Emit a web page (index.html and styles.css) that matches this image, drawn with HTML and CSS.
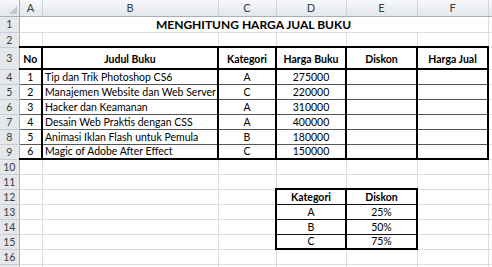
FILE: index.html
```html
<!DOCTYPE html>
<html>
<head>
<meta charset="utf-8">
<link rel="stylesheet" href="styles.css">
</head>
<body>
<table class="sheet">
  <colgroup>
    <col class="c-rh"><col class="c-a"><col class="c-b"><col class="c-c"><col class="c-d"><col class="c-e"><col class="c-f"><col class="c-g">
  </colgroup>
  <tr class="r-head">
    <td class="corner"><span class="tri"></span></td>
    <td class="ch">A</td><td class="ch">B</td><td class="ch">C</td><td class="ch">D</td><td class="ch">E</td><td class="ch">F</td><td class="ch"></td>
  </tr>
  <tr class="r-1">
    <td class="rh">1</td>
    <td colspan="6" class="title">MENGHITUNG HARGA JUAL BUKU</td><td></td>
  </tr>
  <tr class="r-2">
    <td class="rh">2</td><td></td><td></td><td></td><td></td><td></td><td></td><td></td>
  </tr>
  <tr class="r-3">
    <td class="rh">3</td>
    <td class="th v">No</td><td class="th v">Judul Buku</td><td class="th v">Kategori</td><td class="th v">Harga Buku</td><td class="th v">Diskon</td><td class="th v">Harga Jual</td><td></td>
  </tr>
  <tr class="r">
    <td class="rh">4</td>
    <td class="d v ctr">1</td><td class="d v">Tip dan Trik Photoshop CS6</td><td class="d v ctr">A</td><td class="d v ctr">275000</td><td class="d v"></td><td class="d v"></td><td></td>
  </tr>
  <tr class="r">
    <td class="rh">5</td>
    <td class="d v ctr">2</td><td class="d v">Manajemen Website dan Web Server</td><td class="d v ctr">C</td><td class="d v ctr">220000</td><td class="d v"></td><td class="d v"></td><td></td>
  </tr>
  <tr class="r">
    <td class="rh">6</td>
    <td class="d v ctr">3</td><td class="d v">Hacker dan Keamanan</td><td class="d v ctr">A</td><td class="d v ctr">310000</td><td class="d v"></td><td class="d v"></td><td></td>
  </tr>
  <tr class="r">
    <td class="rh">7</td>
    <td class="d v ctr">4</td><td class="d v">Desain Web Praktis dengan CSS</td><td class="d v ctr">A</td><td class="d v ctr">400000</td><td class="d v"></td><td class="d v"></td><td></td>
  </tr>
  <tr class="r">
    <td class="rh">8</td>
    <td class="d v ctr">5</td><td class="d v">Animasi Iklan Flash untuk Pemula</td><td class="d v ctr">B</td><td class="d v ctr">180000</td><td class="d v"></td><td class="d v"></td><td></td>
  </tr>
  <tr class="r">
    <td class="rh">9</td>
    <td class="last v ctr">6</td><td class="last v">Magic of Adobe After Effect</td><td class="last v ctr">C</td><td class="last v ctr">150000</td><td class="last v"></td><td class="last v"></td><td></td>
  </tr>
  <tr class="r">
    <td class="rh">10</td><td></td><td></td><td></td><td></td><td></td><td></td><td></td>
  </tr>
  <tr class="r">
    <td class="rh">11</td><td></td><td></td><td></td><td></td><td></td><td></td><td></td>
  </tr>
  <tr class="r">
    <td class="rh">12</td><td></td><td></td><td></td>
    <td class="k-th k-l">Kategori</td><td class="k-th">Diskon</td><td></td><td></td>
  </tr>
  <tr class="r">
    <td class="rh">13</td><td></td><td></td><td></td>
    <td class="k k-l">A</td><td class="k">25%</td><td></td><td></td>
  </tr>
  <tr class="r">
    <td class="rh">14</td><td></td><td></td><td></td>
    <td class="k k-l">B</td><td class="k">50%</td><td></td><td></td>
  </tr>
  <tr class="r">
    <td class="rh">15</td><td></td><td></td><td></td>
    <td class="k-last k-l">C</td><td class="k-last">75%</td><td></td><td></td>
  </tr>
  <tr class="r">
    <td class="rh">16</td><td></td><td></td><td></td><td></td><td></td><td></td><td></td>
  </tr>
  <tr class="r">
    <td class="rh"></td><td></td><td></td><td></td><td></td><td></td><td></td><td></td>
  </tr>
</table>
</body>
</html>
```

FILE: styles.css
```css
html, body {
  margin: 0;
  padding: 0;
  background: #ffffff;
  overflow: hidden;
}

.sheet {
  border-collapse: collapse;
  table-layout: fixed;
  width: 492px;
  font-family: "Lato", "Open Sans", sans-serif;
  font-size: 10.5px;
  color: #000;
}

.c-rh { width: 19px; }
.c-a { width: 23px; }
.c-b { width: 176px; }
.c-c { width: 58px; }
.c-d { width: 70px; }
.c-e { width: 71px; }
.c-f { width: 71px; }
.c-g { width: 4px; }

.sheet td {
  border: 1px solid #dcdcdc;
  padding: 0 2px;
  white-space: nowrap;
  overflow: hidden;
  vertical-align: middle;
  line-height: 12px;
  height: auto;
}

.r-head { height: 16px; }
.r-1 { height: 16px; }
.r-2 { height: 15px; }
.r-3 { height: 22px; }
.r { height: 15px; }

.sheet .ch {
  background: linear-gradient(#f7f8fa, #e3e6ea);
  color: #3c3c3c;
  text-align: center;
  border-right: 1px solid #cfd3d8;
  border-bottom: 1px solid #a9afb7;
  border-top: 0;
  font-size: 11px;
}

.sheet .corner {
  background: linear-gradient(#f7f8fa, #e3e6ea);
  border-right: 1px solid #a9afb7;
  border-bottom: 1px solid #a9afb7;
  border-top: 0;
  border-left: 0;
  position: relative;
  padding: 0;
}

.tri {
  position: absolute;
  right: 2px;
  bottom: 2px;
  width: 0;
  height: 0;
  border-left: 8px solid transparent;
  border-bottom: 8px solid #c3c8ce;
}

.sheet .rh {
  background: #e4e7eb;
  color: #3c3c3c;
  text-align: center;
  border-left: 0;
  border-right: 1px solid #a9afb7;
  border-bottom: 1px solid #c9cdd3;
  padding: 0;
  font-size: 10.5px;
}

.sheet .title {
  font-weight: 700;
  font-size: 12px;
  text-align: center;
  line-height: 13px;
}

.sheet .th {
  font-weight: 700;
  text-align: center;
  border-top: 2px solid #000;
  border-bottom: 2px solid #000;
  padding-top: 2px;
}

.sheet .v {
  border-right: 2px solid #000;
}

.sheet .d {
  border-bottom: 1px solid #555;
}

.sheet .last {
  border-bottom: 2px solid #000;
}

.ctr {
  text-align: center;
}

.sheet .k-th,
.sheet .k,
.sheet .k-last {
  text-align: center;
  border-right: 2px solid #000;
}

.sheet .k-th {
  font-weight: 700;
  border-top: 2px solid #000;
  border-bottom: 1px solid #111;
}

.sheet .k {
  border-bottom: 1px solid #111;
}

.sheet .k-last {
  border-bottom: 2px solid #000;
}

.sheet .k-l {
  border-left: 2px solid #000;
}
```
